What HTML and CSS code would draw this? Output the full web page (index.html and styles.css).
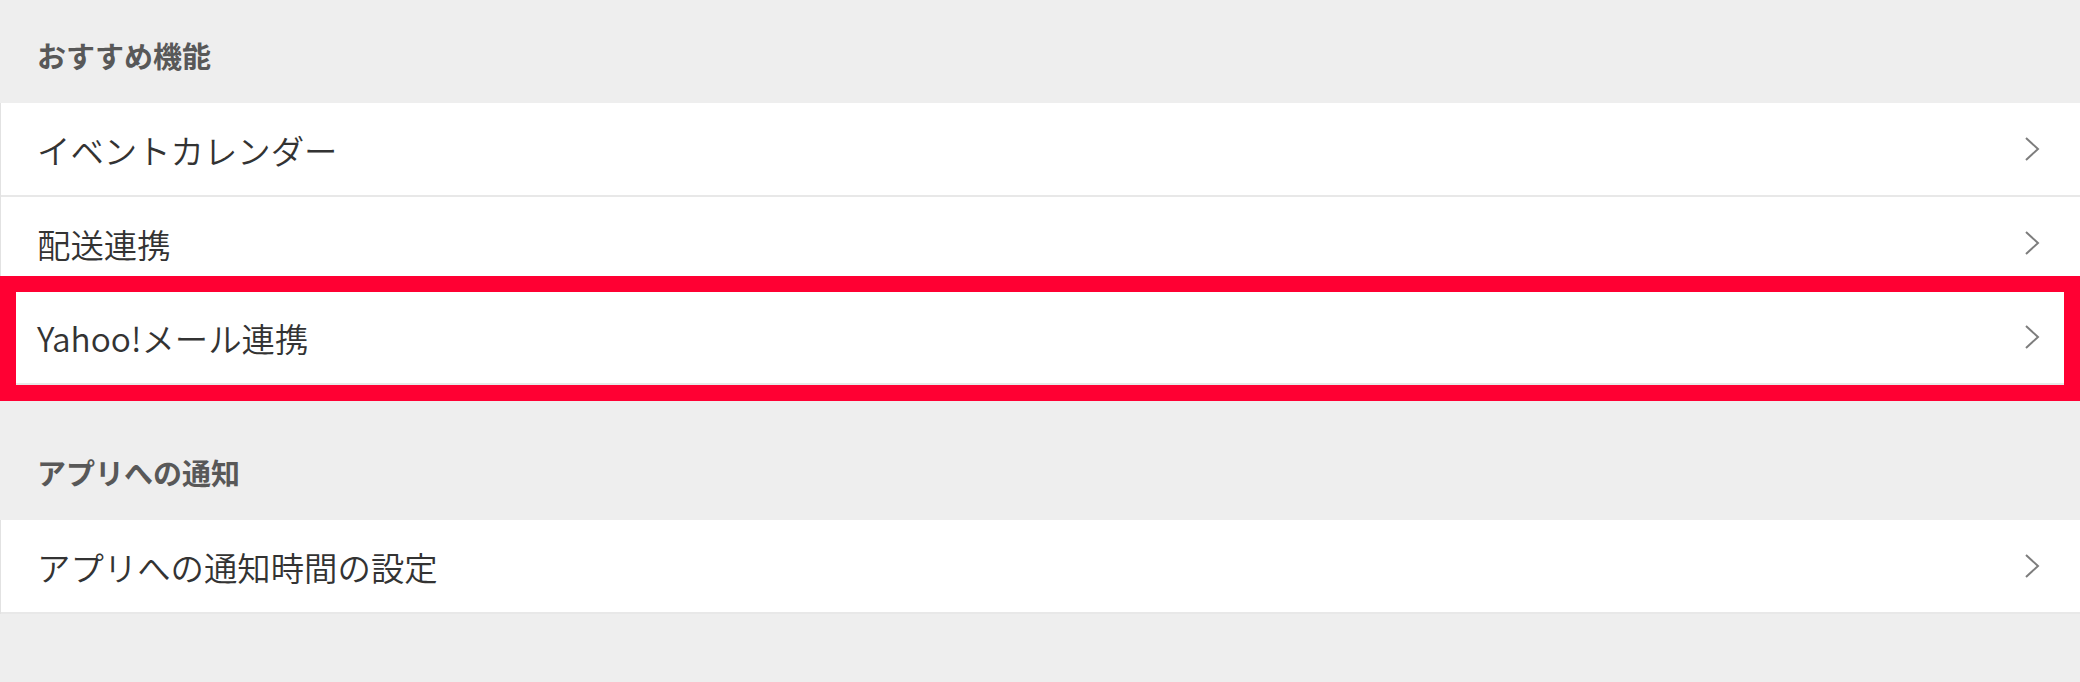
FILE: index.html
```html
<html>
    <head>
    <title>設定</title>
    <link rel="stylesheet" href="styles.css">
    </head>
    <body>

    <section class="settings-group">
        <h2 class="group-title">おすすめ機能</h2>
        <ul class="menu-list">
            <li class="menu-row">
                <span>イベントカレンダー</span>
                <svg class="chevron" width="16" height="26" viewBox="0 0 16 26"><polyline points="2,2 14,13 2,24"/></svg>
            </li>
            <li class="menu-row">
                <span>配送連携</span>
                <svg class="chevron" width="16" height="26" viewBox="0 0 16 26"><polyline points="2,2 14,13 2,24"/></svg>
            </li>
            <li class="menu-row highlighted">
                <span>Yahoo!メール連携</span>
                <svg class="chevron" width="16" height="26" viewBox="0 0 16 26"><polyline points="2,2 14,13 2,24"/></svg>
            </li>
        </ul>
    </section>

    <section class="settings-group spaced">
        <h2 class="group-title">アプリへの通知</h2>
        <ul class="menu-list">
            <li class="menu-row">
                <span>アプリへの通知時間の設定</span>
                <svg class="chevron" width="16" height="26" viewBox="0 0 16 26"><polyline points="2,2 14,13 2,24"/></svg>
            </li>
        </ul>
    </section>

    </body>
</html>
```

FILE: styles.css
```css
body {
  font-family: "Noto Sans CJK JP", "Noto Sans", sans-serif;
  margin: 0;
  padding: 0;
  background-color: #eeeeee;
}

.settings-group.spaced {
  margin-top: 32px;
}

.group-title {
  box-sizing: border-box;
  height: 103px;
  margin: 0;
  padding: 35px 37px 0;
  font-size: 29px;
  line-height: 40px;
  font-weight: 700;
  color: #585858;
}

.menu-list {
  list-style: none;
  margin: 0;
  padding: 0;
  border-left: 1px solid #e2e2e2;
}

.menu-row {
  position: relative;
  box-sizing: content-box;
  height: 92px;
  display: flex;
  align-items: center;
  justify-content: space-between;
  padding: 0 40px 0 36px;
  background-color: #ffffff;
  border-bottom: 2px solid #e8e8e8;
  font-size: 33.4px;
  font-weight: 350;
  color: #333333;
}

.chevron {
  fill: none;
  stroke: #7d7d7d;
  stroke-width: 2;
}

/* red marker frame drawn over the selected row */
.menu-row.highlighted::after {
  content: "";
  position: absolute;
  top: -15px;
  left: -1px;
  right: 0;
  bottom: -18px;
  border: 16px solid #ff0033;
  pointer-events: none;
}
```
